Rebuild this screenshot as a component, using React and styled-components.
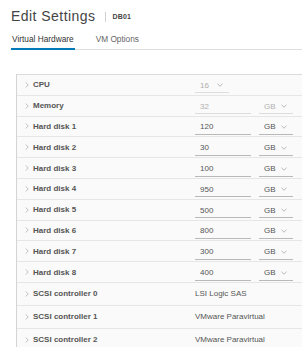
import React from "react";
import styled, { createGlobalStyle } from "styled-components";

const Global = createGlobalStyle`
  html, body { margin: 0; padding: 0; background: #fff; overflow: hidden; }
  body { font-family: "Liberation Sans", Arial, sans-serif; }
`;

const Page = styled.div`
  width: 302px;
  height: 347px;
  overflow: hidden;
  padding: 8px 0 0 11px;
  box-sizing: border-box;
`;

const Header = styled.div`
  display: flex;
  align-items: center;
  height: 17px;
`;

const Title = styled.h1`
  margin: 0;
  font-size: 14px;
  line-height: 17px;
  font-weight: 400;
  letter-spacing: 0.45px;
  color: #444;
`;

const Divider = styled.span`
  width: 1px;
  height: 10px;
  background: #d0d0d0;
  margin: 0 6px 0 10px;
`;

const VmName = styled.span`
  font-size: 7px;
  font-weight: 700;
  color: #444;
  letter-spacing: 0.2px;
`;

const TabBar = styled.div`
  display: flex;
  gap: 20px;
  margin-top: 6px;
  border-bottom: 1px solid #dedede;
`;

const Tab = styled.div`
  height: 17px;
  line-height: 17px;
  font-size: 8.3px;
  color: ${(p) => (p.$active ? "#333" : "#666")};
  padding: 0 1px;
  margin-bottom: -1px;
  border-bottom: 2px solid ${(p) => (p.$active ? "#0079b8" : "transparent")};
`;

const Table = styled.div`
  margin: 24px 0 0 5px;
  width: 320px;
  border-top: 1px solid #dcdcdc;
  border-left: 1px solid #d4d4d4;
  background: #fafafa;
`;

const Row = styled.div`
  display: flex;
  align-items: center;
  height: ${(p) => (p.$tall ? 22 : 19.8)}px;
  border-bottom: 1px solid #e6e6e6;
`;

const LabelCell = styled.div`
  width: 178px;
  display: flex;
  align-items: center;
  padding-left: 8px;
  box-sizing: border-box;
  font-size: 8px;
  font-weight: 700;
  color: #555;
`;

const Caret = styled.svg`
  width: 4px;
  height: 6px;
  margin-right: 4px;
`;

const ValueCell = styled.div`
  display: flex;
  align-items: center;
  gap: 8px;
  font-size: 8px;
  color: #555;
`;

const Field = styled.div`
  width: ${(p) => p.$w}px;
  height: 15px;
  box-sizing: border-box;
  display: flex;
  align-items: center;
  justify-content: space-between;
  padding: 0 6px 0 5px;
  margin-top: 2px;
  border-bottom: 1px solid ${(p) => (p.$disabled ? "#dddddd" : "#b9b9b9")};
  color: ${(p) => (p.$disabled ? "#b0b0b0" : "#555")};
  font-size: 8px;
`;

const Chevron = styled.svg`
  width: 6px;
  height: 4px;
`;

const Plain = styled.span`
  color: #555;
`;

const Down = () => (
  <Chevron viewBox="0 0 6 4">
    <path d="M0.5 0.8 L3 3.2 L5.5 0.8" fill="none" stroke="#a8a8a8" strokeWidth="0.8" />
  </Chevron>
);

const Right = () => (
  <Caret viewBox="0 0 4 6">
    <path d="M0.8 0.5 L3.2 3 L0.8 5.5" fill="none" stroke="#b0b0b0" strokeWidth="0.8" />
  </Caret>
);

const disks = [
  ["Hard disk 1", "120"],
  ["Hard disk 2", "30"],
  ["Hard disk 3", "100"],
  ["Hard disk 4", "950"],
  ["Hard disk 5", "500"],
  ["Hard disk 6", "800"],
  ["Hard disk 7", "300"],
  ["Hard disk 8", "400"],
];

const scsi = [
  ["SCSI controller 0", "LSI Logic SAS"],
  ["SCSI controller 1", "VMware Paravirtual"],
  ["SCSI controller 2", "VMware Paravirtual"],
];

export default function App() {
  return (
    <>
      <Global />
      <Page>
        <Header>
          <Title>Edit Settings</Title>
          <Divider />
          <VmName>DB01</VmName>
        </Header>
        <TabBar>
          <Tab $active>Virtual Hardware</Tab>
          <Tab>VM Options</Tab>
        </TabBar>
        <Table>
          <Row>
            <LabelCell><Right />CPU</LabelCell>
            <ValueCell>
              <Field $w={34} $disabled>16<Down /></Field>
            </ValueCell>
          </Row>
          <Row>
            <LabelCell><Right />Memory</LabelCell>
            <ValueCell>
              <Field $w={56} $disabled>32</Field>
              <Field $w={34} $disabled>GB<Down /></Field>
            </ValueCell>
          </Row>
          {disks.map(([label, size]) => (
            <Row key={label}>
              <LabelCell><Right />{label}</LabelCell>
              <ValueCell>
                <Field $w={56}>{size}</Field>
                <Field $w={34}>GB<Down /></Field>
              </ValueCell>
            </Row>
          ))}
          {scsi.map(([label, type]) => (
            <Row key={label} $tall>
              <LabelCell><Right />{label}</LabelCell>
              <ValueCell>
                <Plain>{type}</Plain>
              </ValueCell>
            </Row>
          ))}
        </Table>
      </Page>
    </>
  );
}
